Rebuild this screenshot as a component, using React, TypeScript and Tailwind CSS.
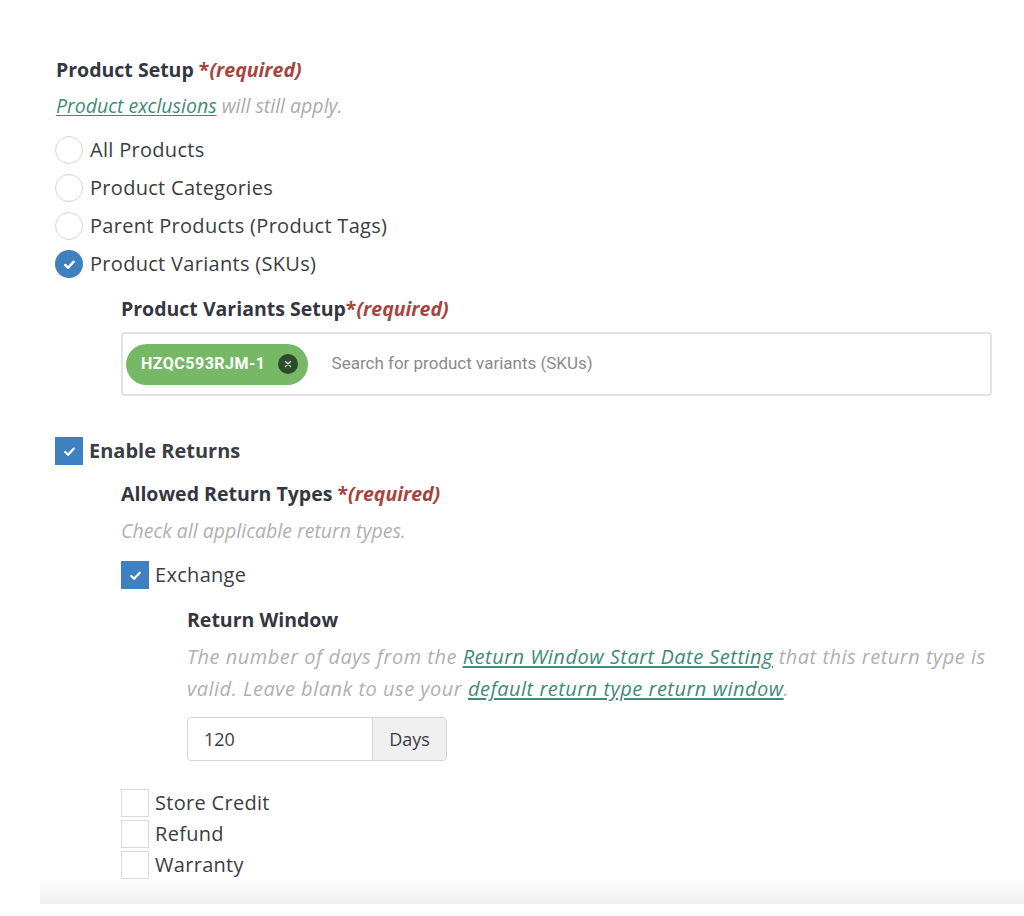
const font = { fontFamily: '"Open Sans", Lato, sans-serif' };

function Required({ gap = true }: { gap?: boolean }) {
  return (
    <span className={`font-bold text-[#a8443e] ${gap ? 'ml-1' : ''}`}>
      *<i>(required)</i>
    </span>
  );
}

function Radio({ label, checked }: { label: string; checked?: boolean }) {
  return (
    <label className="flex h-[38px] items-center">
      {checked ? (
        <span className="flex h-[28px] w-[28px] items-center justify-center rounded-full bg-[#3f80c0]">
          <svg width="15" height="15" viewBox="0 0 16 16" fill="none">
            <path d="M3.5 8.5l3 3 6-6.5" stroke="white" strokeWidth="2.6" strokeLinecap="round" strokeLinejoin="round" />
          </svg>
        </span>
      ) : (
        <span className="h-[28px] w-[28px] rounded-full border border-[#d6d6d6] bg-white" />
      )}
      <span className="ml-[7px] text-[20px] leading-[28px] tracking-[0.3px] text-[#3a3d44]">{label}</span>
    </label>
  );
}

function Check({ label, checked, bold }: { label: string; checked?: boolean; bold?: boolean }) {
  return (
    <label className="flex items-center">
      {checked ? (
        <span className="flex h-[28px] w-[28px] items-center justify-center bg-[#3f80c0]">
          <svg width="15" height="15" viewBox="0 0 16 16" fill="none">
            <path d="M3.5 8.5l3 3 6-6.5" stroke="white" strokeWidth="2.4" strokeLinecap="round" strokeLinejoin="round" />
          </svg>
        </span>
      ) : (
        <span className="h-[28px] w-[28px] border border-[#d9d9d9] bg-white" />
      )}
      <span className={`ml-[6px] text-[20px] leading-[28px] tracking-[0.3px] text-[#3a3d44] ${bold ? 'font-bold tracking-[0px] text-[19px]' : ''}`}>{label}</span>
    </label>
  );
}

export default function App() {
  return (
    <div className="relative h-[916px] w-[1024px] overflow-hidden bg-white" style={font}>
      <div className="pl-[56px] pt-[56px]">
        <h3 className="text-[19.5px] font-bold leading-[28px] text-[#343741]">
          Product Setup <Required gap={false} />
        </h3>
        <p className="mt-[8px] text-[19.5px] italic leading-[28px] text-[#ababab]">
          <a className="text-[#3f8a78] underline underline-offset-2">Product exclusions</a> will still apply.
        </p>
        <div className="-ml-[1px] mt-[11px] flex flex-col">
          <Radio label="All Products" />
          <Radio label="Product Categories" />
          <Radio label="Parent Products (Product Tags)" />
          <Radio label="Product Variants (SKUs)" checked />
        </div>

        <div className="ml-[65px] mt-[12px]">
          <h4 className="text-[19.5px] font-bold leading-[28px] text-[#343741]">
            Product Variants Setup<Required gap={false} />
          </h4>
          <div className="mt-[9px] flex h-[64px] w-[871px] items-center rounded-[4px] border-2 border-[#e3e3e3] pl-[3px]">
            <span className="flex h-[41px] items-center rounded-full bg-[#76b866] pl-[15px] pr-[10px] text-[16px] font-bold tracking-[0.5px] text-white" style={{ fontFamily: 'Roboto, sans-serif' }}>
              HZQC593RJM-1
              <span className="ml-[12px] flex h-[20px] w-[20px] items-center justify-center rounded-full bg-[#2e4a2d]">
                <svg width="8" height="8" viewBox="0 0 8 8">
                  <path d="M1.5 1.5l5 5M6.5 1.5l-5 5" stroke="#c6dcc0" strokeWidth="1.4" strokeLinecap="round" />
                </svg>
              </span>
            </span>
            <span className="ml-[24px] text-[17px] text-[#8a8a8a]" style={{ fontFamily: 'Roboto, sans-serif' }}>
              Search for product variants (SKUs)
            </span>
          </div>
        </div>

        <div className="-ml-[1px] mt-[41px]">
          <Check label="Enable Returns" checked bold />
        </div>

        <div className="ml-[65px] mt-[15px]">
          <h4 className="text-[19.5px] font-bold leading-[28px] text-[#343741]">
            Allowed Return Types <Required gap={false} />
          </h4>
          <p className="mt-[9px] text-[19.5px] italic leading-[28px] text-[#b0b0b0]">Check all applicable return types.</p>
          <div className="mt-[16px]">
            <Check label="Exchange" checked />
          </div>

          <div className="ml-[66px] mt-[17px]">
            <h5 className="text-[19.5px] font-bold leading-[28px] text-[#343741]">Return Window</h5>
            <p className="mt-[7px] w-[860px] text-[20px] italic leading-[32px] tracking-[0.5px] text-[#b0b0b0]">
              The number of days from the{' '}
              <a className="text-[#3f8a78] underline underline-offset-2">Return Window Start Date Setting</a> that this
              return type is
              <br />
              valid. Leave blank to use your{' '}
              <a className="text-[#3f8a78] underline underline-offset-2">default return type return window</a>.
            </p>
            <div className="mt-[12px] flex h-[44px] w-[260px] rounded-[4px] border border-[#d4d4d4]">
              <span className="flex flex-1 items-center pl-[16px] text-[18px] text-[#3a3d44]">120</span>
              <span className="flex w-[74px] items-center justify-center rounded-r-[4px] border-l border-[#d4d4d4] bg-[#f0f0f0] text-[18px] text-[#3a3d44]">
                Days
              </span>
            </div>
          </div>

          <div className="mt-[28px] flex flex-col gap-[3px]">
            <Check label="Store Credit" />
            <Check label="Refund" />
            <Check label="Warranty" />
          </div>
        </div>
      </div>
      <div className="absolute bottom-[12px] left-[40px] right-0 h-[26px] bg-gradient-to-b from-white/0 to-[#efefef]" />
    </div>
  );
}
